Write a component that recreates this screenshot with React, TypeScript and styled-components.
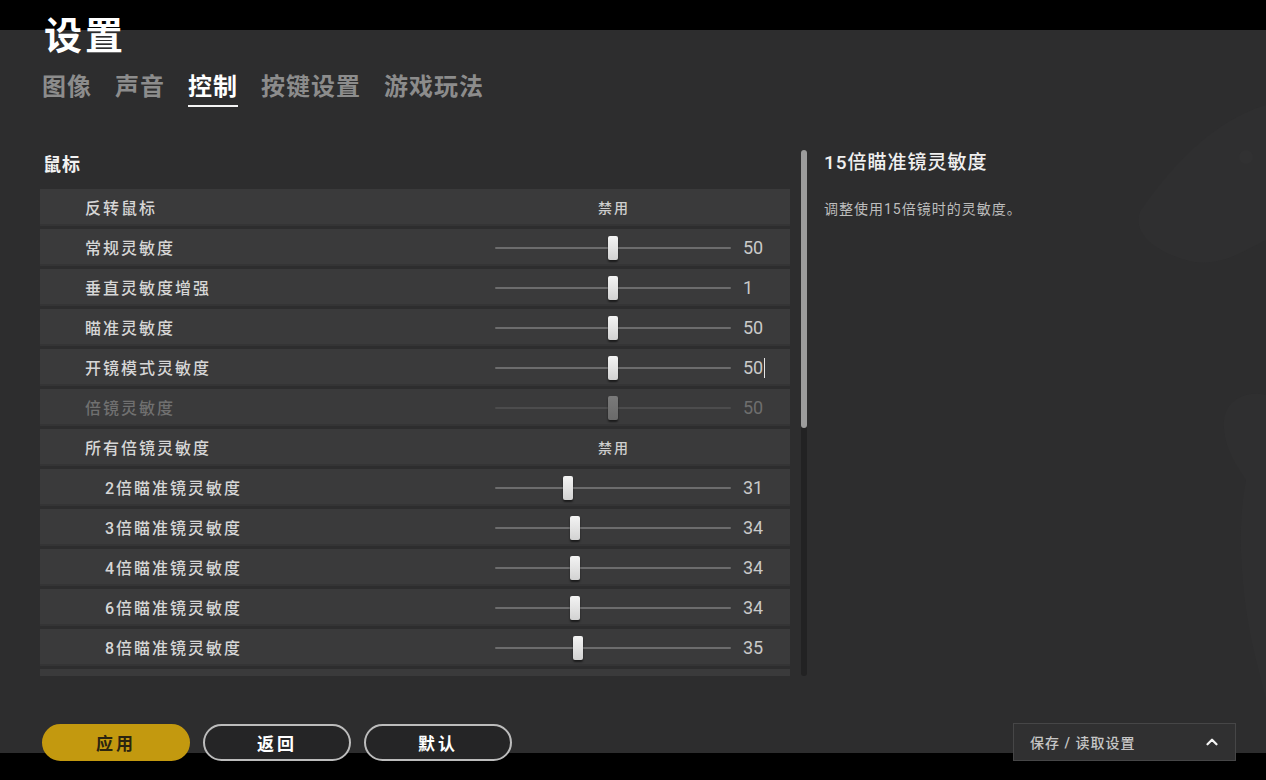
import styled, { createGlobalStyle } from 'styled-components';
import { ChevronUp } from 'lucide-react';

const GlobalStyle = createGlobalStyle`
  html, body {
    margin: 0;
    padding: 0;
    background: #000;
  }
  body {
    font-family: Roboto, "Noto Sans CJK SC", "Noto Sans", sans-serif;
    -webkit-font-smoothing: antialiased;
  }
  * {
    box-sizing: border-box;
  }
`;

const Page = styled.div`
  position: relative;
  width: 1266px;
  height: 780px;
  overflow: hidden;
  padding: 0 30px 0 40px;
  display: flex;
  flex-direction: column;
  background: linear-gradient(
    #000 0 30px,
    #2d2d2e 30px 753px,
    #000 753px
  );
`;

const Backdrop = styled.svg`
  position: absolute;
  right: 0;
  top: 100px;
  width: 170px;
  height: 660px;
  pointer-events: none;
`;

const Title = styled.h1`
  margin: 14px 0 0 4px;
  font-size: 38px;
  line-height: 44px;
  font-weight: 700;
  color: #fff;
  letter-spacing: 3px;
  position: relative;
`;

const TabBar = styled.nav`
  display: flex;
  gap: 23px;
  margin: 13px 0 0 2px;
  position: relative;
`;

const Tab = styled.span<{ $active?: boolean }>`
  font-size: 24px;
  line-height: 32px;
  font-weight: 700;
  letter-spacing: 1px;
  padding-bottom: 2px;
  color: ${(p) => (p.$active ? '#ffffff' : '#8c8c8c')};
  border-bottom: 2px solid ${(p) => (p.$active ? '#f4f4f4' : 'transparent')};
`;

const Body = styled.div`
  display: flex;
  margin-top: 43px;
  position: relative;
`;

const LeftCol = styled.div`
  width: 750px;
  display: flex;
  flex-direction: column;
`;

const SectionTitle = styled.h2`
  margin: 0 0 12px 3px;
  padding-top: 3px;
  font-size: 18px;
  line-height: 24px;
  font-weight: 700;
  color: #f2f2f2;
  letter-spacing: 1px;
`;

const List = styled.div`
  height: 487px;
  overflow: hidden;
  display: flex;
  flex-direction: column;
  gap: 3px;
`;

const Row = styled.div<{ $disabled?: boolean }>`
  flex: none;
  height: 37px;
  display: grid;
  grid-template-columns: 455px 236px 1fr;
  align-items: center;
  background: #3a3a3b;
  box-shadow: inset 0 -2px 0 #343435;
  color: ${(p) => (p.$disabled ? '#707070' : '#d6d6d6')};
`;

const Label = styled.span<{ $indent?: boolean }>`
  padding-left: ${(p) => (p.$indent ? 65 : 45)}px;
  font-size: 16px;
  font-weight: 500;
  letter-spacing: 2px;
  margin-top: -2px;
`;

const Toggle = styled.span`
  text-align: center;
  font-size: 14px;
  font-weight: 500;
  letter-spacing: 2px;
  color: #cfcfcf;
  padding-left: 2px;
  margin-top: -2px;
`;

const Track = styled.div<{ $disabled?: boolean }>`
  position: relative;
  height: 24px;
  &::before {
    content: '';
    position: absolute;
    left: 0;
    right: 0;
    top: 11px;
    height: 2px;
    border-radius: 1px;
    background: ${(p) => (p.$disabled ? '#4c4c4d' : '#6c6c6d')};
  }
`;

const Thumb = styled.div<{ $disabled?: boolean }>`
  position: absolute;
  top: 0;
  width: 10px;
  height: 24px;
  transform: translateX(-50%);
  border-radius: 2px;
  background: ${(p) =>
    p.$disabled
      ? 'linear-gradient(#7a7a7a, #6a6a6a)'
      : 'linear-gradient(#f4f4f4, #d2d2d2)'};
  box-shadow: 0 2px 2px rgba(0, 0, 0, 0.55);
`;

const Value = styled.span<{ $disabled?: boolean }>`
  padding-left: 12px;
  font-size: 18px;
  color: ${(p) => (p.$disabled ? '#6e6e6e' : '#c9c9c9')};
  display: flex;
  align-items: center;
`;

const Caret = styled.span`
  display: inline-block;
  width: 1px;
  height: 20px;
  margin-left: 1px;
  background: #e6e6e6;
`;

const ScrollBar = styled.div`
  width: 6px;
  height: 526px;
  margin-left: 11px;
  border-radius: 3px;
  background: #222223;
`;

const ScrollThumb = styled.div`
  height: 278px;
  border-radius: 3px;
  background: #9c9c9c;
`;

const Detail = styled.aside`
  margin-left: 17px;
  display: flex;
  flex-direction: column;
`;

const DetailTitle = styled.h3`
  margin: 0;
  font-size: 19px;
  line-height: 26px;
  font-weight: 500;
  color: #f0f0f0;
  letter-spacing: 1px;
`;

const DetailText = styled.p`
  margin: 23px 0 0;
  font-size: 14px;
  line-height: 20px;
  color: #bdbdbd;
  letter-spacing: 1px;
`;

const Footer = styled.div`
  display: flex;
  align-items: center;
  justify-content: space-between;
  margin-top: 48px;
  position: relative;
`;

const ButtonGroup = styled.div`
  display: flex;
  gap: 13px;
  padding-left: 2px;
`;

const ActionButton = styled.button<{ $primary?: boolean }>`
  width: 148px;
  height: 37px;
  border-radius: 19px;
  font-family: inherit;
  font-size: 17px;
  font-weight: 700;
  letter-spacing: 3px;
  cursor: pointer;
  color: ${(p) => (p.$primary ? '#2b2410' : '#ffffff')};
  background: ${(p) => (p.$primary ? '#c3990f' : '#252526')};
  border: 2px solid ${(p) => (p.$primary ? '#c3990f' : '#bcbcbc')};
`;

const SaveLoad = styled.button`
  width: 223px;
  height: 38px;
  padding: 0 14px 0 16px;
  display: flex;
  align-items: center;
  justify-content: space-between;
  background: #303031;
  border: 1px solid #464647;
  color: #c6c6c6;
  font-family: inherit;
  font-size: 14px;
  font-weight: 500;
  letter-spacing: 1px;
  margin-top: -1px;
  svg {
    color: #f4f4f4;
  }
`;

type Setting = {
  label: string;
  value?: string;
  frac?: number;
  toggle?: boolean;
  indent?: boolean;
  disabled?: boolean;
  caret?: boolean;
};

const settings: Setting[] = [
  { label: '反转鼠标', toggle: true, value: '禁用' },
  { label: '常规灵敏度', value: '50', frac: 0.5 },
  { label: '垂直灵敏度增强', value: '1', frac: 0.5 },
  { label: '瞄准灵敏度', value: '50', frac: 0.5 },
  { label: '开镜模式灵敏度', value: '50', frac: 0.5, caret: true },
  { label: '倍镜灵敏度', value: '50', frac: 0.5, disabled: true },
  { label: '所有倍镜灵敏度', toggle: true, value: '禁用' },
  { label: '2倍瞄准镜灵敏度', value: '31', frac: 0.31, indent: true },
  { label: '3倍瞄准镜灵敏度', value: '34', frac: 0.34, indent: true },
  { label: '4倍瞄准镜灵敏度', value: '34', frac: 0.34, indent: true },
  { label: '6倍瞄准镜灵敏度', value: '34', frac: 0.34, indent: true },
  { label: '8倍瞄准镜灵敏度', value: '35', frac: 0.352, indent: true },
];

const tabs = ['图像', '声音', '控制', '按键设置', '游戏玩法'];

const SettingRow = ({ s }: { s: Setting }) => (
  <Row $disabled={s.disabled}>
    <Label $indent={s.indent}>{s.label}</Label>
    {s.toggle ? (
      <Toggle>{s.value}</Toggle>
    ) : (
      <>
        <Track $disabled={s.disabled}>
          <Thumb $disabled={s.disabled} style={{ left: `${(s.frac ?? 0) * 100}%` }} />
        </Track>
        <Value $disabled={s.disabled}>
          {s.value}
          {s.caret && <Caret />}
        </Value>
      </>
    )}
  </Row>
);

export default function App() {
  return (
    <>
      <GlobalStyle />
      <Page>
        <Backdrop viewBox="0 0 170 660">
          <path
            d="M170 5 C120 20 80 60 45 110 C35 130 55 150 90 160 C120 170 150 150 170 140 Z"
            fill="#2f2f30"
          />
          <circle cx="150" cy="57" r="7" fill="#313132" />
          <path
            d="M170 295 C150 290 130 300 128 320 C126 345 140 365 150 380 C140 430 145 500 160 560 L170 600 Z"
            fill="#2f2f30"
          />
        </Backdrop>
        <Title>设置</Title>
        <TabBar>
          {tabs.map((t) => (
            <Tab key={t} $active={t === '控制'}>
              {t}
            </Tab>
          ))}
        </TabBar>
        <Body>
          <LeftCol>
            <SectionTitle>鼠标</SectionTitle>
            <List>
              {settings.map((s) => (
                <SettingRow key={s.label} s={s} />
              ))}
              {/* next row, scrolled just into view */}
              <Row />
            </List>
          </LeftCol>
          <ScrollBar>
            <ScrollThumb />
          </ScrollBar>
          <Detail>
            <DetailTitle>15倍瞄准镜灵敏度</DetailTitle>
            <DetailText>调整使用15倍镜时的灵敏度。</DetailText>
          </Detail>
        </Body>
        <Footer>
          <ButtonGroup>
            <ActionButton $primary>应用</ActionButton>
            <ActionButton>返回</ActionButton>
            <ActionButton>默认</ActionButton>
          </ButtonGroup>
          <SaveLoad>
            保存 / 读取设置
            <ChevronUp size={18} strokeWidth={3} />
          </SaveLoad>
        </Footer>
      </Page>
    </>
  );
}
